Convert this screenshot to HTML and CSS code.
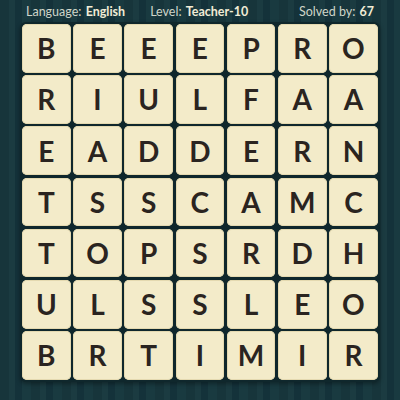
FILE: index.html
```html
<!DOCTYPE html>
<html lang="en">
<head>
  <meta charset="UTF-8">
  <title>Word Puzzle - Teacher 10</title>
  <link rel="stylesheet" href="styles.css">
</head>
<body>
  <div class="page">
    <div class="info">
      <span>Language: <b>English</b></span>
      <span class="level">Level: <b>Teacher-10</b></span>
      <span class="solved">Solved by: <b>67</b></span>
    </div>

    <div class="board">
      <div class="tile">B</div><div class="tile">E</div><div class="tile">E</div><div class="tile">E</div><div class="tile">P</div><div class="tile">R</div><div class="tile">O</div>
      <div class="tile">R</div><div class="tile">I</div><div class="tile">U</div><div class="tile">L</div><div class="tile">F</div><div class="tile">A</div><div class="tile">A</div>
      <div class="tile">E</div><div class="tile">A</div><div class="tile">D</div><div class="tile">D</div><div class="tile">E</div><div class="tile">R</div><div class="tile">N</div>
      <div class="tile">T</div><div class="tile">S</div><div class="tile">S</div><div class="tile">C</div><div class="tile">A</div><div class="tile">M</div><div class="tile">C</div>
      <div class="tile">T</div><div class="tile">O</div><div class="tile">P</div><div class="tile">S</div><div class="tile">R</div><div class="tile">D</div><div class="tile">H</div>
      <div class="tile">U</div><div class="tile">L</div><div class="tile">S</div><div class="tile">S</div><div class="tile">L</div><div class="tile">E</div><div class="tile">O</div>
      <div class="tile">B</div><div class="tile">R</div><div class="tile">T</div><div class="tile">I</div><div class="tile">M</div><div class="tile">I</div><div class="tile">R</div>
    </div>
  </div>
</body>
</html>
```

FILE: styles.css
```css
html, body {
  margin: 0;
  padding: 0;
}
body {
  width: 400px;
  height: 400px;
  overflow: hidden;
  font-family: Lato, 'Noto Sans', sans-serif;
  background-color: #17353b;
  background-image: repeating-linear-gradient(90deg,
    #17353b 0px, #17353b 9px,
    #1b3b41 9px, #1b3b41 15px,
    #14323a 15px, #14323a 22px,
    #193a40 22px, #193a40 31px);
}
.page {
  padding: 0 20px;
}
.info {
  display: flex;
  height: 22px;
  align-items: center;
  padding: 0 6px;
  font-size: 12.5px;
  color: #cfd5c9;
}
.info .level {
  margin-left: 25px;
}
.info .solved {
  margin-left: auto;
}
.info b {
  color: #f1ecd6;
  font-weight: 700;
  margin-left: 1px;
}
.board {
  display: grid;
  grid-template-columns: repeat(7, 48.6px);
  grid-auto-rows: 48.6px;
  gap: 2.6px;
  padding: 2px;
  background: #0f272c;
  border-radius: 6px;
  box-shadow: 0 2px 4px rgba(0, 0, 0, 0.35);
}
.tile {
  display: flex;
  align-items: center;
  justify-content: center;
  background: #f3ebc9;
  border-radius: 5px;
  box-shadow: inset 0 0 0 1px #e4d9b0;
  color: #2a2420;
  font-size: 28px;
  font-weight: 700;
}
```
